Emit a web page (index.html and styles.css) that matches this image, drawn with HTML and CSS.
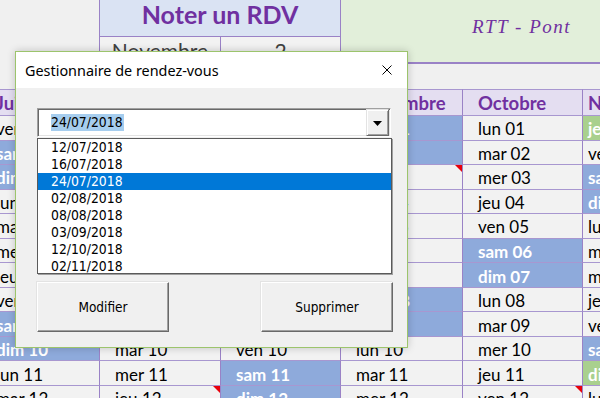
FILE: index.html
```html
<!DOCTYPE html>
<html>
<head>
    <title>Noter un RDV</title>
    <link rel="stylesheet" href="styles.css">
</head>
<body>
    <div class="sheet" id="sheet">
        <div class="cell blank"></div>
        <div class="cell title">Noter un RDV</div>
        <div class="cell rtt">RTT - Pont</div>
        <div class="cell blank"></div>
        <div class="cell pick">Novembre</div>
        <div class="cell pick">2</div>
        <div class="cell gap"></div>
    </div>

    <div class="dialog">
        <div class="titlebar">
            <span class="dialog-title">Gestionnaire de rendez-vous</span>
            <svg class="close" width="10" height="10" viewBox="0 0 10 10">
                <path d="M0.5 0.5 L9.5 9.5 M9.5 0.5 L0.5 9.5" stroke="#000" stroke-width="1" fill="none"/>
            </svg>
        </div>
        <div class="dialog-body">
            <div class="combo">
                <span class="combo-value"><span class="combo-sel">24/07/2018</span></span>
                <span class="combo-btn">
                    <svg width="9" height="5" viewBox="0 0 9 5"><path d="M0 0 H9 L4.5 5 Z" fill="#000"/></svg>
                </span>
            </div>
            <ul class="listbox" id="listeRdv"></ul>
            <div class="buttons">
                <button class="btn">Modifier</button>
                <button class="btn">Supprimer</button>
            </div>
        </div>
    </div>

    <script>
        const mois = ['Juin', 'Juillet', 'Août', 'Septembre', 'Octobre', 'Novembre'];
        const jours = ['dim', 'lun', 'mar', 'mer', 'jeu', 'ven', 'sam'];
        const feries = ['01/11', '11/11'];
        const rdv = ['12/07/2018', '16/07/2018', '24/07/2018', '02/08/2018',
                     '08/08/2018', '03/09/2018', '12/10/2018', '02/11/2018'];
        const selection = '24/07/2018';

        const sheet = document.getElementById('sheet');

        function addCell(text, className) {
            const cell = document.createElement('div');
            cell.className = 'cell ' + className;
            cell.textContent = text;
            sheet.appendChild(cell);
        }

        mois.forEach(function(nom, m) {
            addCell(nom, m === 5 ? 'head last' : 'head');
        });

        for (let jour = 1; jour <= 12; jour++) {
            for (let m = 0; m < mois.length; m++) {
                const date = new Date(2018, 5 + m, jour);
                const jj = String(jour).padStart(2, '0');
                const mm = String(6 + m).padStart(2, '0');
                let cls = 'day';
                if (feries.indexOf(jj + '/' + mm) >= 0) {
                    cls += ' ferie';
                } else if (date.getDay() === 0 || date.getDay() === 6) {
                    cls += ' weekend';
                }
                if (rdv.indexOf(jj + '/' + mm + '/2018') >= 0) cls += ' rdv';
                if (m === 5) cls += ' last';
                addCell(jours[date.getDay()] + ' ' + jj, cls);
            }
        }

        // liste des rendez-vous dans le formulaire
        const liste = document.getElementById('listeRdv');
        rdv.forEach(function(d) {
            const item = document.createElement('li');
            item.textContent = d;
            if (d === selection) item.className = 'selected';
            liste.appendChild(item);
        });
    </script>
</body>
</html>
```

FILE: styles.css
```css
body {
    margin: 0;
    padding: 0;
    width: 600px;
    height: 398px;
    overflow: hidden;
    background: #f0f0f0;
    font-family: Lato, "Liberation Sans", sans-serif;
}

/* ---- feuille Excel ---- */

.sheet {
    display: grid;
    grid-template-columns: 119px 121px 120px 122px 120px 120px;
    grid-template-rows: 37px 27px 25px 27px repeat(12, 24.55px);
    margin-left: -20px;
    width: 722px;
}

.cell {
    box-sizing: border-box;
    display: flex;
    align-items: center;
    white-space: nowrap;
    overflow: hidden;
    position: relative;
}

.title {
    grid-column: 2 / 4;
    justify-content: center;
    padding-bottom: 8px;
    background: #dae3f3;
    border-left: 1px solid #9a82c6;
    border-bottom: 1px solid #9a82c6;
    color: #7030a0;
    font-weight: bold;
    font-size: 25px;
}

.rtt {
    grid-column: 4 / 7;
    grid-row: 1 / 3;
    justify-content: center;
    padding-bottom: 8px;
    background: #e2efda;
    border-left: 1px solid #9a82c6;
    border-bottom: 2px solid #9a82c6;
    color: #7030a0;
    font-family: "Liberation Serif", serif;
    font-style: italic;
    font-size: 19px;
    letter-spacing: 1.5px;
}

.pick {
    justify-content: center;
    background: #f2f2f2;
    border-left: 1px solid #9a82c6;
    border-bottom: 1px solid #9a82c6;
    color: #404040;
    font-size: 21px;
}

.gap {
    grid-column: 1 / -1;
}

.head,
.day {
    padding-left: 15px;
    border-left: 1px solid #9a82c6;
    border-bottom: 1px solid #a897d0;
    font-size: 17px;
    background: #f2f2f2;
    color: #000;
}

.head {
    background: #e4def1;
    border-top: 1px solid #a897d0;
    color: #7030a0;
    font-weight: bold;
    font-size: 18.5px;
    padding-top: 1px;
}

.day {
    padding-top: 2px;
}

.last {
    padding-left: 5px;
}

.weekend {
    background: #8eaadb;
    color: #fff;
    font-weight: bold;
}

.ferie {
    background: #a9d08e;
    color: #fff;
    font-weight: bold;
}

/* petit triangle rouge de commentaire */
.rdv::after {
    content: '';
    position: absolute;
    top: 0;
    right: 0;
    border-left: 7px solid transparent;
    border-top: 7px solid #e8000b;
}

/* ---- formulaire ---- */

.dialog {
    position: absolute;
    left: 15px;
    top: 51px;
    width: 393px;
    height: 297px;
    box-sizing: border-box;
    border: 1px solid #9cc46c;
    background: #f0f0f0;
    box-shadow: 0 0 8px rgba(0,0,0,0.2);
    display: flex;
    flex-direction: column;
}

.titlebar {
    height: 36px;
    background: #fff;
    display: flex;
    align-items: center;
    justify-content: space-between;
    padding: 0 15px 0 9px;
}

.dialog-title {
    font-family: "Noto Sans", sans-serif;
    font-size: 14.4px;
    color: #000;
}

.close {
    display: block;
}

.dialog-body {
    padding: 20px 14px 0 21px;
    font-family: "DejaVu Sans Condensed", "Liberation Sans", sans-serif;
    font-size: 13.8px;
}

.combo {
    box-sizing: border-box;
    width: 354px;
    height: 29px;
    background: #fff;
    border: 1px solid;
    border-color: #a0a0a0 #fff #fff #a0a0a0;
    box-shadow: inset 1px 1px 0 #696969, inset -1px -1px 0 #e3e3e3;
    display: flex;
    align-items: center;
    justify-content: space-between;
    padding: 1px 1px 1px 13px;
}

.combo-sel {
    background: #a6cdee;
    line-height: 17px;
    display: inline-block;
    padding: 0 1px 0 0;
}

.combo-btn {
    box-sizing: border-box;
    width: 23px;
    height: 27px;
    background: #f0f0f0;
    border: 1px solid;
    border-color: #e3e3e3 #696969 #696969 #e3e3e3;
    box-shadow: inset 1px 1px 0 #fff, inset -1px -1px 0 #a0a0a0;
    display: flex;
    align-items: center;
    justify-content: center;
}

.combo-btn svg {
    display: block;
    margin-top: 1px;
}

.listbox {
    box-sizing: border-box;
    list-style: none;
    margin: 1px 0 0;
    padding: 0;
    width: 355px;
    height: 136px;
    overflow: hidden;
    background: #fff;
    border: 1px solid #5a5a5a;
    box-shadow: 1px 1px 0 #a0a0a0;
}

.listbox li {
    height: 17px;
    line-height: 17px;
    padding-left: 13px;
    color: #000;
}

.listbox li.selected {
    background: #0078d7;
    color: #fff;
}

.buttons {
    display: flex;
    justify-content: space-between;
    width: 356px;
    margin-top: 8px;
}

.btn {
    box-sizing: border-box;
    width: 132px;
    height: 50px;
    background: #f0f0f0;
    border: 1px solid;
    border-color: #fff #696969 #696969 #fff;
    box-shadow: inset -1px -1px 0 #a0a0a0, -1px -1px 0 #e3e3e3;
    font-family: "DejaVu Sans Condensed", "Liberation Sans", sans-serif;
    font-size: 13.5px;
    color: #000;
    padding: 0;
}
```
